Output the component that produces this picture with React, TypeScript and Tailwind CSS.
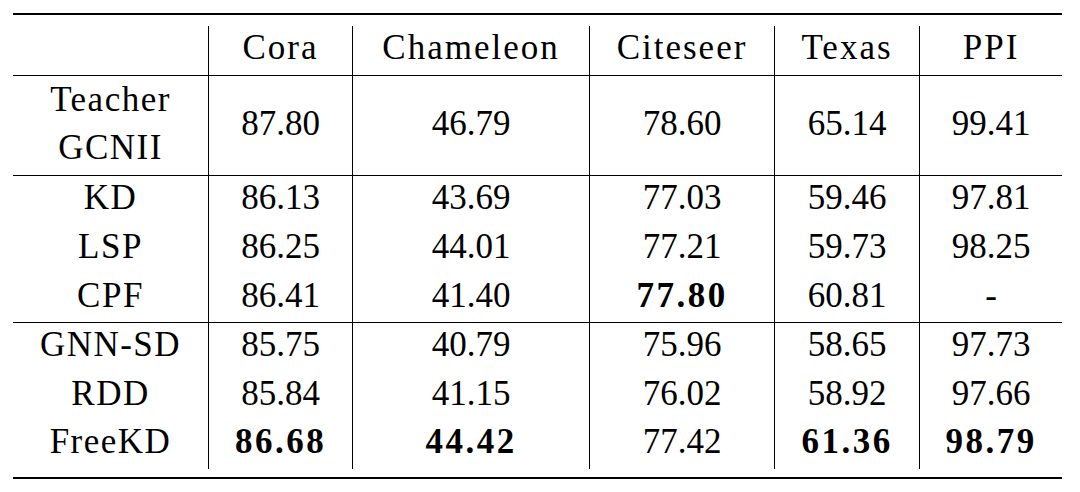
const grid = "grid grid-cols-[195px_144px_237px_185px_145px_143px]";

type Cell = { v: string; b?: boolean };
type RowData = { label: string; h: string; cells: Cell[] };

const headers = ["Cora", "Chameleon", "Citeseer", "Texas", "PPI"];
const teacher = ["87.80", "46.79", "78.60", "65.14", "99.41"];

const baselines: RowData[] = [
  { label: "KD", h: "h-[49px]", cells: [{ v: "86.13" }, { v: "43.69" }, { v: "77.03" }, { v: "59.46" }, { v: "97.81" }] },
  { label: "LSP", h: "h-[49px]", cells: [{ v: "86.25" }, { v: "44.01" }, { v: "77.21" }, { v: "59.73" }, { v: "98.25" }] },
  { label: "CPF", h: "h-[48px]", cells: [{ v: "86.41" }, { v: "41.40" }, { v: "77.80", b: true }, { v: "60.81" }, { v: "-" }] },
];

const selfDistill: RowData[] = [
  { label: "GNN-SD", h: "h-[49px]", cells: [{ v: "85.75" }, { v: "40.79" }, { v: "75.96" }, { v: "58.65" }, { v: "97.73" }] },
  { label: "RDD", h: "h-[48px]", cells: [{ v: "85.84" }, { v: "41.15" }, { v: "76.02" }, { v: "58.92" }, { v: "97.66" }] },
  { label: "FreeKD", h: "h-[49px]", cells: [{ v: "86.68", b: true }, { v: "44.42", b: true }, { v: "77.42" }, { v: "61.36", b: true }, { v: "98.79", b: true }] },
];

function Row({ r }: { r: RowData }) {
  return (
    <div className={`${grid} ${r.h} leading-[44px]`}>
      <div className="font-['Liberation_Serif',serif] text-center tracking-[1.5px]">{r.label}</div>
      {r.cells.map((c, i) => (
        <div
          key={i}
          className={
            c.b
              ? "font-['Liberation_Serif',serif] border-l border-black text-center font-bold tracking-[2.5px]"
              : "font-['Liberation_Serif',serif] border-l border-black text-center"
          }
        >
          {c.v}
        </div>
      ))}
    </div>
  );
}

export default function App() {
  return (
    <div className="w-[1080px] h-[492px] bg-white text-black text-[35px] font-serif">
      <div className="ml-[13px] pt-[13px] w-[1049px]">
        <div className="h-[2px] bg-black" />
        <div className="h-[11px]" />

        <div className={`${grid} h-[49px] leading-[44px]`}>
          <div />
          {headers.map((t) => (
            <div key={t} className="font-['Liberation_Serif',serif] border-l border-black text-center tracking-[2px]">
              {t}
            </div>
          ))}
        </div>
        <div className="h-px bg-black" />

        <div className={`${grid} h-[99px] leading-[48px]`}>
          <div className="font-['Liberation_Serif',serif] flex flex-col items-center justify-center pb-[6px] tracking-[1.5px]">
            <span>Teacher</span>
            <span>GCNII</span>
          </div>
          {teacher.map((v) => (
            <div key={v} className="font-['Liberation_Serif',serif] border-l border-black flex items-center justify-center pb-[6px]">
              {v}
            </div>
          ))}
        </div>
        <div className="h-px bg-black" />

        {baselines.map((r) => (
          <Row key={r.label} r={r} />
        ))}
        <div className="h-px bg-black" />

        {selfDistill.map((r) => (
          <Row key={r.label} r={r} />
        ))}

        <div className="h-[8px]" />
        <div className="h-[2px] bg-black" />
      </div>
    </div>
  );
}
